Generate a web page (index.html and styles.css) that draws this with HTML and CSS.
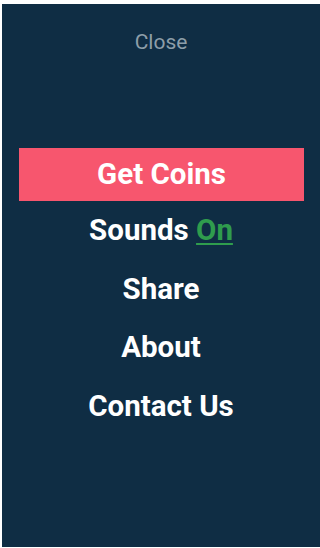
FILE: index.html
```html
<!DOCTYPE html>
<html>
<head>
<meta charset="utf-8">
<link rel="stylesheet" href="styles.css">
</head>
<body>
<div class="panel">
  <div class="close">Close</div>
  <nav class="menu">
    <div class="item coins">Get Coins</div>
    <div class="item">Sounds <span class="on">On</span></div>
    <div class="item">Share</div>
    <div class="item">About</div>
    <div class="item">Contact Us</div>
  </nav>
</div>
</body>
</html>
```
FILE: styles.css
```css
html, body {
  margin: 0;
  padding: 0;
  background: #ffffff;
}
body {
  font-family: Roboto, "Liberation Sans", sans-serif;
}
.panel {
  margin: 4px 0 0 2px;
  width: 318px;
  height: 543px;
  background: #0f2d44;
  box-sizing: border-box;
  padding-top: 26px;
  display: flex;
  flex-direction: column;
}
.close {
  text-align: center;
  color: #8d9ea9;
  font-size: 21px;
  line-height: 24px;
  height: 24px;
}
.menu {
  margin-top: 94px;
  display: flex;
  flex-direction: column;
}
.item {
  text-align: center;
  color: #ffffff;
  font-weight: 700;
  font-size: 29.5px;
  height: 58.5px;
  line-height: 58.5px;
}
.item.coins {
  background: #f7566e;
  margin: 0 16px 0 17px;
  height: 53px;
  line-height: 53px;
}
.on {
  color: #2f9c4d;
  text-decoration: underline;
  text-decoration-thickness: 2px;
  text-underline-offset: 3px;
}
```
